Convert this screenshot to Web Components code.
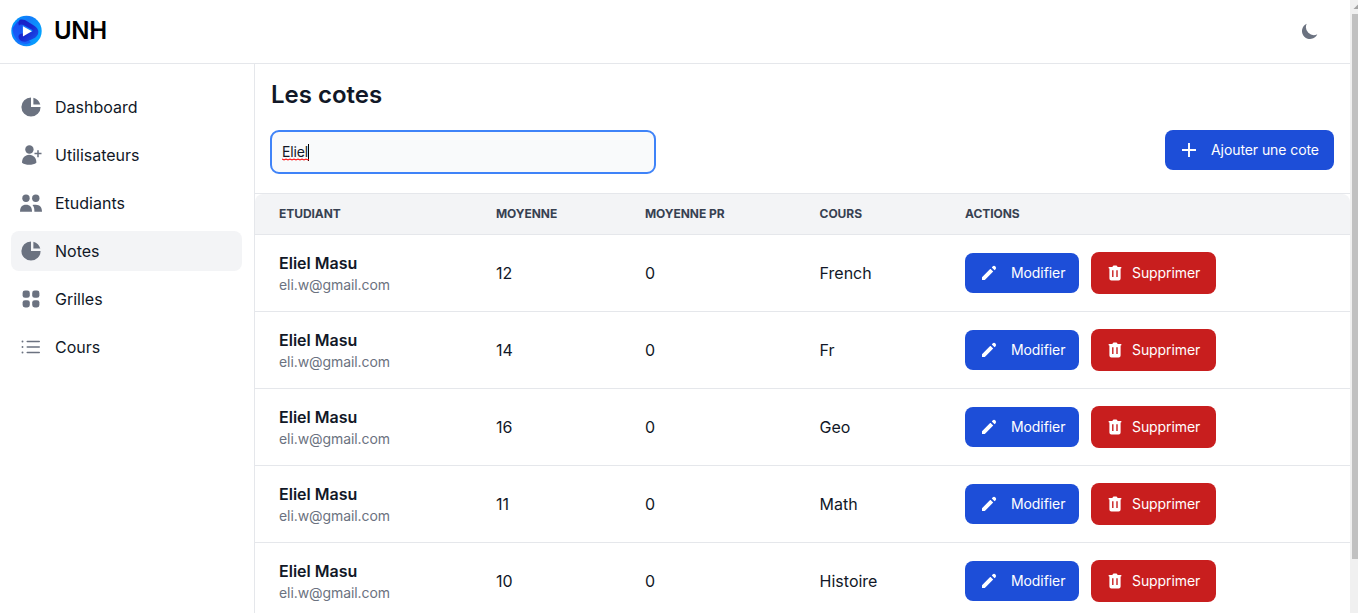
<!DOCTYPE html>
<html lang="fr">
<head>
<meta charset="utf-8">
<title>UNH</title>
<style>
html,body{margin:0;height:100%;overflow:hidden;background:#fff}
body{font-family:Inter,"Liberation Sans",sans-serif;color:#111827}
</style>
</head>
<body>
<unh-app></unh-app>
<script>
const icons = {
  pie: '<svg viewBox="0 0 20 20"><path d="M2 10a8 8 0 018-8v8h8a8 8 0 11-16 0z"/><path d="M12 2.252A8.014 8.014 0 0117.748 8H12V2.252z"/></svg>',
  user: '<svg viewBox="0 0 24 24"><circle cx="10.4" cy="6.500" r="4.200"/><path d="M10.200 11.800C5.700 12 3 15.200 3 19.800c2 1.500 4.500 2 7.200 2S15.600 21.300 17.400 19.800C17.400 15.200 14.700 12 10.200 11.800z"/><path d="M19 7.200v7M15.500 10.500h7" fill="none" stroke="currentColor" stroke-width="1.500"/></svg>',
  people: '<svg viewBox="0 0 24 24"><circle cx="7" cy="7.200" r="3.700"/><circle cx="16.800" cy="7.200" r="3.700"/><path d="M1 20.700c0-4.600 2-7 6-7s6 2.400 6 7z"/><path d="M13.500 13.900c1-.2 2.200-.3 3.300-.2 4 .2 6.200 2.400 6.200 7h-7.600c0-2.900-.2-4.900-1.900-6.800z"/></svg>',
  grid: '<svg viewBox="0 0 20 20"><rect x="3" y="3" width="6" height="6" rx="2"/><rect x="11" y="3" width="6" height="6" rx="2"/><rect x="3" y="11" width="6" height="6" rx="2"/><rect x="11" y="11" width="6" height="6" rx="2"/></svg>',
  list: '<svg viewBox="0 0 24 24"><path d="M8.200 6.500h12.100M8.200 12h12.100M8.200 17.500h12.100" fill="none" stroke="currentColor" stroke-width="1.400" stroke-linecap="round"/><circle cx="3.500" cy="6.500" r=".95"/><circle cx="3.500" cy="12" r=".95"/><circle cx="3.500" cy="17.500" r=".95"/></svg>',
  moon: '<svg viewBox="0 0 20 20"><path d="M17.293 13.293A8 8 0 016.707 2.707a8.001 8.001 0 1010.586 10.586z"/></svg>',
  plus: '<svg viewBox="0 0 20 20"><path d="M10 3v14M3 10h14" fill="none" stroke="currentColor" stroke-width="1.900"/></svg>',
  pencil: '<svg viewBox="0 0 20 20"><path d="M13.586 3.586a2 2 0 112.828 2.828l-.793.793-2.828-2.828.793-.793zM11.379 5.793L3 14.172V17h2.828l8.380-8.379-2.830-2.828z"/></svg>',
  trash: '<svg viewBox="0 0 20 20"><path fill-rule="evenodd" d="M4.200 4H7.500C7.600 3 8.300 2.500 9 2.500h2c.7 0 1.400.5 1.500 1.500h3.300q.7 0 .7.750t-.7.750H15.600V15.500q0 2-2 2H6.400q-2 0-2-2V5.500H4.200q-.7 0-.7-.75T4.200 4zM7.100 7.300v6.800h1.400V7.300zM11.300 7.300v6.800h1.400V7.300z"/></svg>',
  logo: '<svg viewBox="0 0 32 32"><defs><linearGradient id="a" x1="0" y1=".2" x2="1" y2=".6"><stop stop-color="#009dff"/><stop offset=".45" stop-color="#1479fa"/><stop offset="1" stop-color="#04a4ff"/></linearGradient><linearGradient id="b" x1="0" y1="0" x2="1" y2="1"><stop stop-color="#171fc5"/><stop offset=".5" stop-color="#1827cf"/><stop offset="1" stop-color="#1959f2"/></linearGradient><linearGradient id="c" x1="0" y1="0" x2="0" y2="1"><stop stop-color="#1a4df0"/><stop offset="1" stop-color="#1664fb"/></linearGradient></defs><circle cx="16" cy="16" r="15.700" fill="url(#a)"/><path d="M1.500 13c0 7 4 14 11 16 3 .8 6 0 8-1.500L12 20V8L7 6z" fill="url(#c)"/><path d="M9 4.500c3-1 6 .3 8 1.700l7 4.300c4 2.500 5 6 3.700 9-1.500 3-4 4-6 5l-5 2c-5 2-9-1-9-5 0-2 2-3 4-3l9-1.500c2-.5 2-1.500.5-2.500l-8-4.500c-2-1-4-1-5 .5-1-2-.8-4 .8-6z" fill="url(#b)"/><path d="M12.300 11v10.800l9.200-5.600z" fill="#fff"/></svg>'
};
function define(name, css, html) {
  customElements.define(name, class extends HTMLElement {
    connectedCallback() {
      const root = this.attachShadow({mode:'open'});
      const markup = typeof html === 'function' ? html(this) : html;
      root.innerHTML = `<style>*{box-sizing:border-box}:host{box-sizing:border-box}${css}</style>${markup}`;
    }
  });
}
define('ui-icon', ':host{display:block;flex:none;width:24px;height:24px}svg{display:block;width:100%;height:100%;fill:currentColor}', e => icons[e.getAttribute('name')]);

define('top-bar', `:host{display:flex;align-items:center;justify-content:space-between;height:64px;border-bottom:1px solid #e5e7eb;padding:0 30px 1px 11px}
 .brand{display:flex;align-items:center;gap:12px;font-size:24px;line-height:32px;font-weight:600;letter-spacing:-.3px;color:#000}
 .brand ui-icon{width:31px;height:32px}.moon{width:20px;height:20px;color:#6b7280}`,
 '<div class="brand"><ui-icon name="logo"></ui-icon><span>UNH</span></div><ui-icon class="moon" name="moon"></ui-icon>');

define('nav-item', `:host{display:flex;align-items:center;height:40px;border-radius:8px;padding:0 8px;gap:12px;font-size:16px;line-height:24px;color:#111827}
 :host([active]){background:#f3f4f6}ui-icon{color:#6b7280}`,
 e => `<ui-icon name="${e.getAttribute('icon')}"></ui-icon><slot></slot>`);

define('side-nav', ':host{display:flex;flex-direction:column;gap:8px;width:255px;flex:none;border-right:1px solid #e5e7eb;padding:23px 12px 0 11px}',
 `<nav-item icon="pie">Dashboard</nav-item><nav-item icon="user">Utilisateurs</nav-item><nav-item icon="people">Etudiants</nav-item><nav-item icon="pie" active>Notes</nav-item><nav-item icon="grid">Grilles</nav-item><nav-item icon="list">Cours</nav-item>`);

define('action-button', `:host{display:flex;align-items:center;height:40px;border-radius:8px;background:#1d4ed8;color:#fff;font-size:14px;line-height:20px;padding:0 14px;gap:12px;white-space:nowrap;flex:none;letter-spacing:-.08px}
 :host([danger]){height:42px;background:#c81e1e;padding:0 16px 0 14px;gap:7px}
 ui-icon{width:20px;height:20px}`,
 e => `<ui-icon name="${e.getAttribute('icon')}"></ui-icon><span><slot></slot></span>`);

define('search-field', `:host{display:flex;align-items:center;width:386px;height:44px;border:2px solid #3f83f8;border-radius:9px;background:#f9fafb;padding:0 10px;font-size:14px;line-height:20px}
 span{position:relative;letter-spacing:-.15px}svg{position:absolute;left:0;bottom:1px;width:27px;height:3px;overflow:hidden}i{width:1px;height:17px;background:#000}`,
 '<span><slot></slot><svg viewBox="0 0 27 3"><path d="M0 1l2 1 2-1 2 1 2-1 2 1 2-1 2 1 2-1 2 1 2-1 2 1 2-1 2 1 2-1" fill="none" stroke="#f00" stroke-width="1.100"/></svg></span><i></i>');

define('grade-row', `:host{display:grid;grid-template-columns:217px 149px 174.600px 145.400px 1fr;align-items:center;height:77px;border-bottom:1px solid #e5e7eb;padding-left:24px;font-size:16px;line-height:24px}
 b{display:block;font-weight:600;line-height:24px}small{display:block;font-size:14px;line-height:20px;letter-spacing:-.08px;color:#6b7280}
 .actions{display:flex;align-items:center;gap:12px}`,
 e => `<div><b>Eliel Masu</b><small>eli.w@gmail.com</small></div><span>${e.getAttribute('moyenne')}</span><span>0</span><span>${e.getAttribute('cours')}</span><div class="actions"><action-button icon="pencil" style="width:114px">Modifier</action-button><action-button danger icon="trash" style="width:125px">Supprimer</action-button></div>`);

define('grade-table', `:host{display:block;border-top:1px solid #e5e7eb}
 header{display:grid;grid-template-columns:217px 149px 174.600px 145.400px 1fr;align-items:center;height:41px;padding-left:24px;background:#f3f4f6;border-bottom:1px solid #e5e7eb;border-radius:8px 8px 0 0;font-size:12px;line-height:16px;font-weight:700;letter-spacing:-.06px;color:#374151}`,
 `<header><span>ETUDIANT</span><span>MOYENNE</span><span>MOYENNE PR</span><span>COURS</span><span>ACTIONS</span></header>` +
 [[12,'French'],[14,'Fr'],[16,'Geo'],[11,'Math'],[10,'Histoire']].map(r=>`<grade-row moyenne="${r[0]}" cours="${r[1]}"></grade-row>`).join(''));

define('scroll-bar', `:host{display:flex;flex-direction:column;width:8px;flex:none;height:613px;background:#f0f0f0;overflow:hidden}
 svg{display:block;width:8px;height:14px;flex:none}.thumb{height:545px;margin-left:2px;background:#c1c1c1}`,
 '<svg viewBox="0 0 8 14"><path d="M3.500 9L8 4.500V9z" fill="#a3a3a3"/></svg><div class="thumb"></div>');

define('unh-app', `:host{display:flex;height:613px;overflow:hidden}.page{flex:1;min-width:0;display:flex;flex-direction:column}
 .body{display:flex;flex:1;min-height:0}main{flex:1;min-width:0}
 h1{margin:0;padding:15px 16px 0;font-size:24px;line-height:32px;font-weight:600}
 .tools{display:flex;align-items:center;justify-content:space-between;padding:19px 16px 19px 15px}.tools action-button{margin-bottom:4px;width:169px}`,
 `<div class="page"><top-bar></top-bar><div class="body"><side-nav></side-nav><main><h1>Les cotes</h1><div class="tools"><search-field>Eliel</search-field><action-button icon="plus">Ajouter une cote</action-button></div><grade-table></grade-table></main></div></div><scroll-bar></scroll-bar>`);
</script>
</body>
</html>
